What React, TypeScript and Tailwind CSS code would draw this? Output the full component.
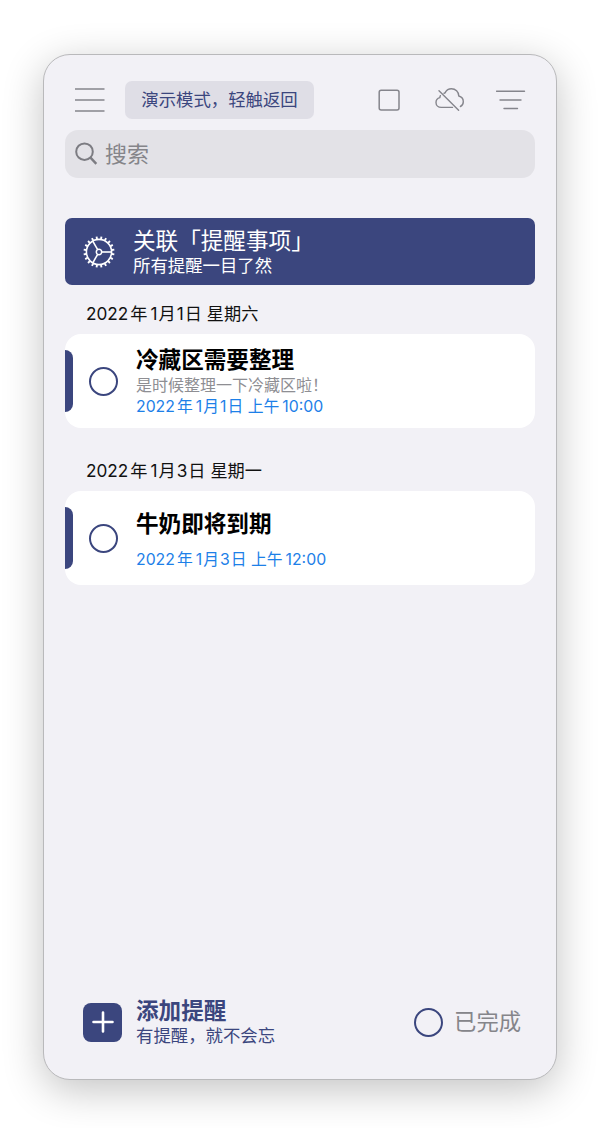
import React from 'react';

interface Reminder {
  title: string;
  note?: string;
  year: string;
  month: string;
  day: string;
  weekday: string;
  time: string;
}

const reminders: Reminder[] = [
  { title: '冷藏区需要整理', note: '是时候整理一下冷藏区啦！', year: '2022', month: '1', day: '1', weekday: '星期六', time: '10:00' },
  { title: '牛奶即将到期', year: '2022', month: '1', day: '3', weekday: '星期一', time: '12:00' },
];

const GearIcon = () => {
  const teeth = Array.from({ length: 20 }, (_, i) => i * 18);
  return (
    <svg width="34" height="34" viewBox="-17 -17 34 34" fill="none" stroke="#fff" strokeWidth="1.6">
      <circle r="12.6" />
      <circle r="2.7" strokeWidth="1.5" />
      {teeth.map((a) => (
        <path key={a} d="M13 0H15.5" strokeWidth="1.9" transform={`rotate(${a + 9})`} />
      ))}
      {[0, 120, 240].map((a) => (
        <path key={a} d="M3 0H12.5" transform={`rotate(${a})`} />
      ))}
    </svg>
  );
};

const CloudOffIcon = () => (
  <svg width="30" height="26" viewBox="0 0 30 26" fill="none" stroke="#85858c" strokeWidth="1.4" strokeLinecap="round" strokeLinejoin="round">
    <path d="M10.4 5.3C11.6 3 13.8 1.8 16.4 1.8C20.5 1.8 23.7 4.8 23.8 9C26.7 9.8 28.3 12 28.3 14.7C28.3 16.8 27.2 18.6 25.4 19.5" />
    <path d="M10.4 5.3C10 6 9.6 6.2 9 6.2" />
    <path d="M5.4 8.7C5 9.3 4.9 9.8 4.9 10.6C2.4 11.2 1 13 1 15.4C1 18.3 3.2 20.4 6.3 20.4H17.5" />
    <path d="M4 3.7L23.6 23.2" />
  </svg>
);

const Circle = () => <span className="h-[29px] w-[29px] shrink-0 rounded-full border-2 border-[#3b467e]" />;

const DateText = ({ item }: { item: Reminder }) => (
  <>
    {item.year}
    <span className="mr-[3px] ml-[2px]">年</span>
    {item.month}
    <span className="mx-[1px]">月</span>
    {item.day}
    <span className="ml-[1px]">日</span>
  </>
);

const ReminderCard = ({ item }: { item: Reminder }) => (
  <section>
    <h2 className="flex h-[43px] items-center pt-[2px] pl-[21px] text-[17.2px] leading-none whitespace-pre text-[#111]">
      <span>
        <DateText item={item} /> {item.weekday}
      </span>
    </h2>
    <div className="flex h-[94px] items-center overflow-hidden rounded-2xl bg-white">
      <span className="h-[62px] w-2 rounded-r-lg bg-[#3b467e]" />
      <span className="ml-4 flex">
        <Circle />
      </span>
      <div className={item.note ? 'ml-[18px] pt-[2px]' : 'ml-[18px] pt-[5px]'}>
        <h3 className="text-[22.6px] leading-7 font-bold text-black">{item.title}</h3>
        {item.note ? (
          <p className="pt-px text-[16px] leading-[21px] text-[#8e8e93]">{item.note}</p>
        ) : (
          <div className="h-[11px]" />
        )}
        <p className="text-[15.8px] leading-[22px] whitespace-pre text-[#1d80e8]">
          <DateText item={item} /> 上午<span className="ml-[3px]">{item.time}</span>
        </p>
      </div>
    </div>
  </section>
);

export default function App() {
  return (
    <main className="h-[1128px] w-[600px] overflow-hidden bg-white px-[43px] pt-[54px] font-['Inter','Noto_Sans_CJK_SC',sans-serif]">
      <div className="flex h-[1026px] w-[514px] flex-col rounded-[27px] border border-[#b9b9bb] bg-[#f2f1f6] px-[21px] shadow-[0_10px_40px_rgba(0,0,0,0.24)]">
        <header className="mt-[26px] flex h-[38px] shrink-0 items-center">
          <svg className="ml-[10px]" width="30" height="26" stroke="#85858c" strokeWidth="1.3">
            <path d="M0 2H29.5M0 13H29.5M0 24H29.5" />
          </svg>
          <button className="ml-5 h-[38px] w-[189px] rounded-[7px] bg-[#dfdee6] text-[17.4px] whitespace-nowrap text-[#3b467e]">
            演示模式，轻触返回
          </button>
          <div className="ml-auto flex items-center">
            <svg width="22" height="22" fill="none" stroke="#85858c" strokeWidth="1.5">
              <rect x="1.2" y="1.2" width="19.8" height="19.8" rx="2" />
            </svg>
            <span className="ml-[35px]">
              <CloudOffIcon />
            </span>
            <svg className="mr-[9px] ml-[31px]" width="30" height="22" stroke="#85858c" strokeWidth="1.4" strokeLinecap="round">
              <path d="M0.5 2.3H28.5M4 11H25M8 19.5H21.5" />
            </svg>
          </div>
        </header>

        <div className="mt-[11px] flex h-[48px] shrink-0 items-center rounded-[13px] bg-[#e3e2e7] pl-[10px] text-[22px] text-[#85858a]">
          <svg width="24" height="24" fill="none" stroke="#7c7c82" strokeWidth="2">
            <circle cx="9.5" cy="9.7" r="8.3" />
            <path d="M15.5 15.7L21.3 21.8" strokeWidth="2.4" />
          </svg>
          <span className="ml-[6px]">搜索</span>
        </div>

        <div className="mt-10 flex h-[67px] shrink-0 items-center rounded-[7px] bg-[#3b467e] pl-[17px] text-white">
          <GearIcon />
          <div className="ml-[17px] pt-[2px]">
            <div className="text-[22.6px] leading-[26px]">关联「提醒事项」</div>
            <div className="text-[17.4px] leading-[23px]">所有提醒一目了然</div>
          </div>
        </div>

        <div className="mt-[6px] flex flex-col gap-5">
          {reminders.map((item) => (
            <ReminderCard key={item.title} item={item} />
          ))}
        </div>

        <footer className="mt-auto mb-[32px] flex items-center pl-[18px] text-[#3b467e]">
          <button className="flex h-[39px] w-[39px] items-center justify-center rounded-lg bg-[#3b467e]">
            <svg width="22" height="22" stroke="#fff" strokeWidth="2.6" strokeLinecap="round">
              <path d="M1.5 11H20.5M11 1.5V20.5" />
            </svg>
          </button>
          <div className="ml-[14px] pt-px">
            <div className="text-[22.6px] leading-[26px] font-bold">添加提醒</div>
            <div className="text-[17.4px] leading-[23px]">有提醒，就不会忘</div>
          </div>
          <div className="mr-[14px] ml-auto flex items-center gap-[11px] text-[22.3px] text-[#85858a]">
            <Circle />
            <span>已完成</span>
          </div>
        </footer>
      </div>
    </main>
  );
}
